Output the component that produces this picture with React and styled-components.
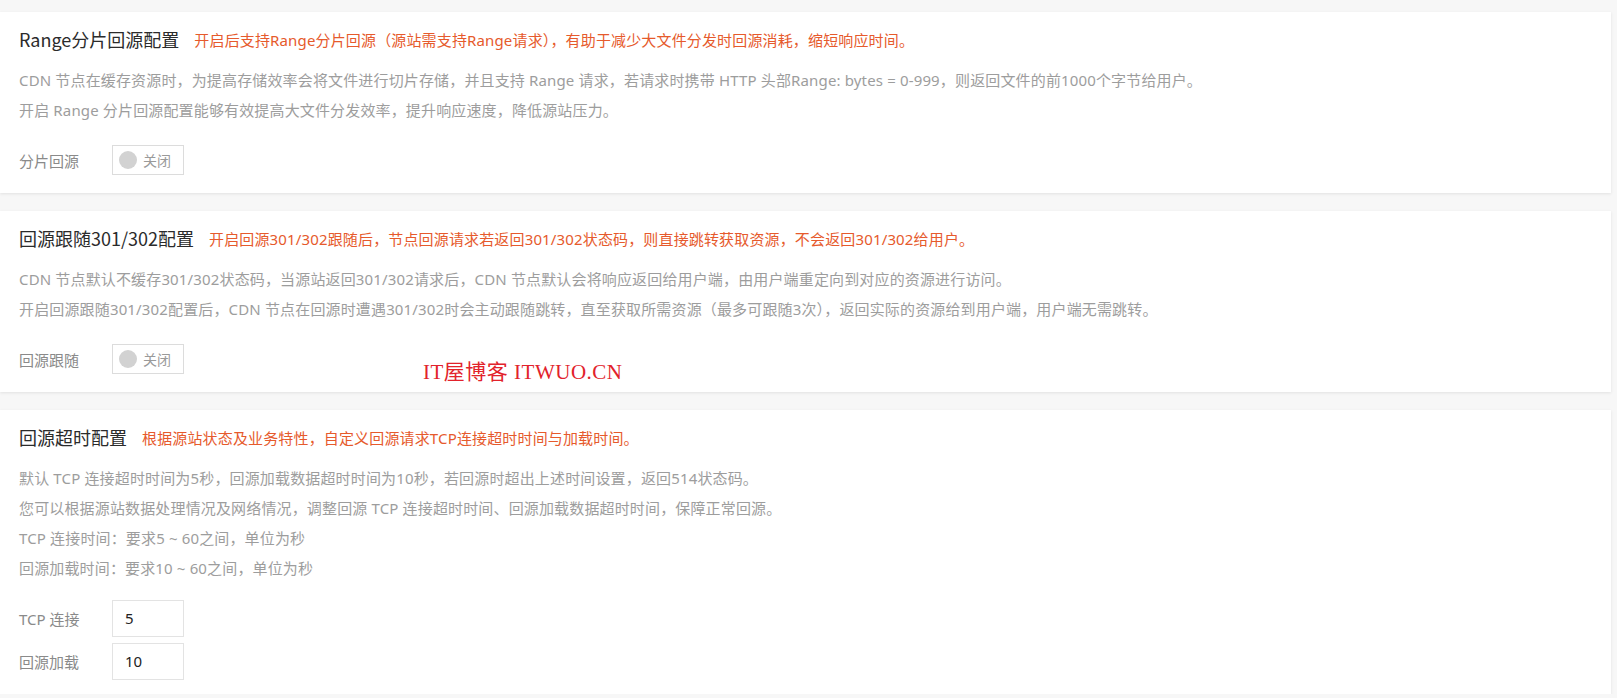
import React from 'react'
import styled, { createGlobalStyle } from 'styled-components'

const GlobalStyle = createGlobalStyle`
  html, body {
    margin: 0;
    padding: 0;
    background: #f7f7f7;
  }
  body {
    font-family: "Noto Sans", "Noto Sans CJK SC", sans-serif;
  }
`

const Page = styled.div`
  width: 1611px;
  padding-top: 12px;
  display: flex;
  flex-direction: column;
  gap: 18px;
`

const Card = styled.section`
  position: relative;
  background: #fff;
  box-shadow: 0 1px 3px rgba(0, 0, 0, 0.09);
  padding: 14px 19px 14px;
`

const Header = styled.div`
  display: flex;
  align-items: center;
  gap: 15px;
  height: 26px;
`

const Title = styled.h3`
  margin: 0;
  font-family: "Noto Sans CJK SC", sans-serif;
  font-size: 18px;
  font-weight: 400;
  color: #2b2b2b;
  white-space: nowrap;
`

const Tip = styled.span`
  font-size: 15px;
  letter-spacing: 0.15px;
  color: #e65a2c;
  white-space: nowrap;
`

const Desc = styled.div`
  margin-top: 13px;
  font-size: 15px;
  letter-spacing: 0.15px;
  line-height: 30px;
  color: #9d9d9d;

  p {
    margin: 0;
    white-space: nowrap;
  }
`

const Controls = styled.div`
  margin-top: 16px;
  display: flex;
  flex-direction: column;
  gap: 5px;
`

const Row = styled.div`
  display: flex;
  align-items: center;
  height: 38px;
`

const Label = styled.span`
  width: 93px;
  font-size: 15px;
  color: #8a8a8a;
`

const Switch = styled.div`
  box-sizing: border-box;
  width: 72px;
  height: 30px;
  border: 1px solid #dcdcdc;
  display: flex;
  align-items: center;
  gap: 6px;
  padding: 0 6px;
  font-size: 14px;
  color: #9a9a9a;
`

const Knob = styled.span`
  width: 18px;
  height: 18px;
  border-radius: 50%;
  background: #d2d2d2;
`

const Input = styled.input`
  box-sizing: border-box;
  width: 72px;
  height: 37px;
  border: 1px solid #e3e3e3;
  padding: 0 12px;
  font-family: inherit;
  font-size: 15px;
  color: #222;
  outline: none;
`

const Watermark = styled.span`
  position: absolute;
  left: 423px;
  top: 144px;
  font-family: "Liberation Serif", "Noto Sans CJK SC", serif;
  font-size: 21px;
  letter-spacing: 0.5px;
  color: #e2222b;
  white-space: nowrap;
`

const Toggle = ({ label }) => (
  <Row>
    <Label>{label}</Label>
    <Switch>
      <Knob />
      关闭
    </Switch>
  </Row>
)

const Field = ({ label, value }) => (
  <Row>
    <Label>{label}</Label>
    <Input defaultValue={value} />
  </Row>
)

export default function App() {
  return (
    <>
      <GlobalStyle />
      <Page>
        <Card>
          <Header>
            <Title>Range分片回源配置</Title>
            <Tip>开启后支持Range分片回源（源站需支持Range请求），有助于减少大文件分发时回源消耗，缩短响应时间。</Tip>
          </Header>
          <Desc>
            <p>CDN 节点在缓存资源时，为提高存储效率会将文件进行切片存储，并且支持 Range 请求，若请求时携带 HTTP 头部Range: bytes = 0-999，则返回文件的前1000个字节给用户。</p>
            <p>开启 Range 分片回源配置能够有效提高大文件分发效率，提升响应速度，降低源站压力。</p>
          </Desc>
          <Controls>
            <Toggle label="分片回源" />
          </Controls>
        </Card>

        <Card>
          <Header>
            <Title>回源跟随301/302配置</Title>
            <Tip>开启回源301/302跟随后，节点回源请求若返回301/302状态码，则直接跳转获取资源，不会返回301/302给用户。</Tip>
          </Header>
          <Desc>
            <p>CDN 节点默认不缓存301/302状态码，当源站返回301/302请求后，CDN 节点默认会将响应返回给用户端，由用户端重定向到对应的资源进行访问。</p>
            <p>开启回源跟随301/302配置后，CDN 节点在回源时遭遇301/302时会主动跟随跳转，直至获取所需资源（最多可跟随3次），返回实际的资源给到用户端，用户端无需跳转。</p>
          </Desc>
          <Controls>
            <Toggle label="回源跟随" />
          </Controls>
          <Watermark>IT屋博客 ITWUO.CN</Watermark>
        </Card>

        <Card>
          <Header>
            <Title>回源超时配置</Title>
            <Tip>根据源站状态及业务特性，自定义回源请求TCP连接超时时间与加载时间。</Tip>
          </Header>
          <Desc>
            <p>默认 TCP 连接超时时间为5秒，回源加载数据超时时间为10秒，若回源时超出上述时间设置，返回514状态码。</p>
            <p>您可以根据源站数据处理情况及网络情况，调整回源 TCP 连接超时时间、回源加载数据超时时间，保障正常回源。</p>
            <p>TCP 连接时间：要求5 ~ 60之间，单位为秒</p>
            <p>回源加载时间：要求10 ~ 60之间，单位为秒</p>
          </Desc>
          <Controls>
            <Field label="TCP 连接" value="5" />
            <Field label="回源加载" value="10" />
          </Controls>
        </Card>
      </Page>
    </>
  )
}
